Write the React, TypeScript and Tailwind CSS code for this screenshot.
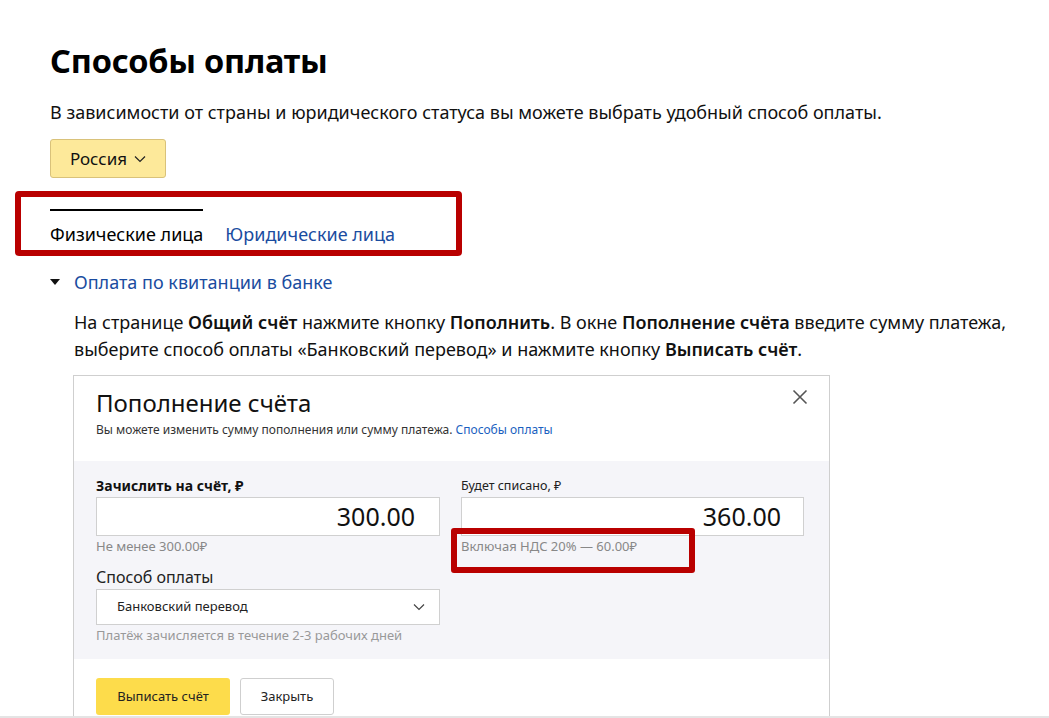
import React from "react";

export default function App() {
  const font = { fontFamily: '"Noto Sans", "Open Sans", sans-serif' };
  return (
    <div className="w-[1049px] h-[718px] overflow-hidden bg-white text-black relative" style={font}>
      <div className="pl-[50px] pt-[39px]">
        <h1 className="text-[32.5px] leading-[44px] font-bold tracking-[-0.2px]">Способы оплаты</h1>
        <p className="mt-[17px] text-[18px] leading-[24px] text-[#111]">
          В зависимости от страны и юридического статуса вы можете выбрать удобный способ оплаты.
        </p>
        <button className="mt-[15px] h-[39px] w-[116px] rounded-[3px] border border-[#d9c27a] bg-[#fde99a] text-[17px] flex items-center justify-center gap-[7px] text-[#111]">
          <span>Россия</span>
          <svg width="12" height="8" viewBox="0 0 12 8" fill="none">
            <path d="M1 1.5L6 6.5L11 1.5" stroke="#222" strokeWidth="1.2" />
          </svg>
        </button>

        <div className="relative mt-[31px]">
          <div className="absolute left-[-35px] top-[-18px] w-[447px] h-[65px] border-[6px] border-[#b90000] rounded-[4px]" />
          <div className="flex gap-[22px] text-[18px] leading-[24px]">
            <div className="border-t-2 border-black pt-[11px]">Физические лица</div>
            <div className="pt-[13px] text-[#1a4ca0]">Юридические лица</div>
          </div>
        </div>

        <div className="mt-[24px] flex items-center">
          <svg width="10" height="6" viewBox="0 0 10 6" className="mr-[14px]">
            <path d="M0 0H10L5 6Z" fill="#111" />
          </svg>
          <span className="text-[18px] leading-[24px] text-[#1a4ca0]">Оплата по квитанции в банке</span>
        </div>

        <div className="pl-[24px]">
          <p className="mt-[15px] text-[18px] leading-[27px] text-[#111]">
            На странице <b className="font-semibold">Общий счёт</b> нажмите кнопку <b className="font-semibold">Пополнить</b>. В окне <b className="font-semibold">Пополнение счёта</b> введите сумму платежа,
            <br />
            выберите способ оплаты «Банковский перевод» и нажмите кнопку <b className="font-semibold">Выписать счёт</b>.
          </p>

          <div className="mt-[12px] ml-[-1px] w-[757px] border border-[#cfcfcf] bg-white h-[360px] relative">
            <div className="px-[22px] pt-[11px] h-[85px] relative">
              <div className="text-[24px] leading-[32px] text-[#111]">Пополнение счёта</div>
              <div className="mt-[4px] text-[12px] leading-[14px] text-[#333]">
                Вы можете изменить сумму пополнения или сумму платежа. <span className="text-[#1a5fc0]">Способы оплаты</span>
              </div>
              <svg className="absolute right-[21px] top-[13px]" width="16" height="16" viewBox="0 0 16 16">
                <path d="M1.5 1.5L14.5 14.5M14.5 1.5L1.5 14.5" stroke="#555" strokeWidth="1.6" />
              </svg>
            </div>
            <div className="bg-[#f5f5f9] h-[198px] px-[22px] pt-[15px]">
              <div className="flex gap-[21px]">
                <div className="w-[344px]">
                  <div className="text-[14px] leading-[20px] font-bold text-[#111]">Зачислить на счёт, ₽</div>
                  <div className="mt-[1px] h-[39px] bg-white border border-[#d0d0d0] flex items-center justify-end pr-[24px] text-[25px] text-[#111]">300.00</div>
                  <div className="mt-[2px] text-[13px] leading-[16px] text-[#888]">Не менее 300.00₽</div>
                  <div className="mt-[13px] text-[16px] leading-[20px] text-[#222]">Способ оплаты</div>
                  <div className="mt-[2px] h-[36px] bg-white border border-[#d0d0d0] flex items-center justify-between pl-[20px] pr-[14px] text-[13px] text-[#222]">
                    <span>Банковский перевод</span>
                    <svg width="12" height="8" viewBox="0 0 12 8" fill="none">
                      <path d="M1 1.5L6 6.5L11 1.5" stroke="#444" strokeWidth="1.2" />
                    </svg>
                  </div>
                  <div className="mt-[2px] text-[13px] leading-[16px] text-[#999]">Платёж зачисляется в течение 2-3 рабочих дней</div>
                </div>
                <div className="w-[343px] relative">
                  <div className="text-[12.5px] leading-[20px] text-[#222]">Будет списано, ₽</div>
                  <div className="mt-[1px] h-[39px] bg-white border border-[#d0d0d0] flex items-center justify-end pr-[22px] text-[25px] text-[#111]">360.00</div>
                  <div className="mt-[2px] text-[13px] leading-[16px] text-[#888]">Включая НДС 20% — 60.00₽</div>
                  <div className="absolute left-[-10px] top-[52px] w-[244px] h-[45px] border-[6px] border-[#b90000] rounded-[3px]" />
                </div>
              </div>
            </div>
            <div className="px-[22px] pt-[19px] flex gap-[10px]">
              <div className="h-[37px] w-[134px] rounded-[3px] bg-[#fddc4b] flex items-center justify-center text-[13px] text-[#222]">Выписать счёт</div>
              <div className="h-[37px] w-[94px] rounded-[3px] bg-white border border-[#cfcfcf] flex items-center justify-center text-[13px] text-[#222]">Закрыть</div>
            </div>
          </div>
        </div>
      </div>
      <div className="absolute left-0 right-0 bottom-0 h-[2px] bg-[#e4e4e4]" />
    </div>
  );
}
